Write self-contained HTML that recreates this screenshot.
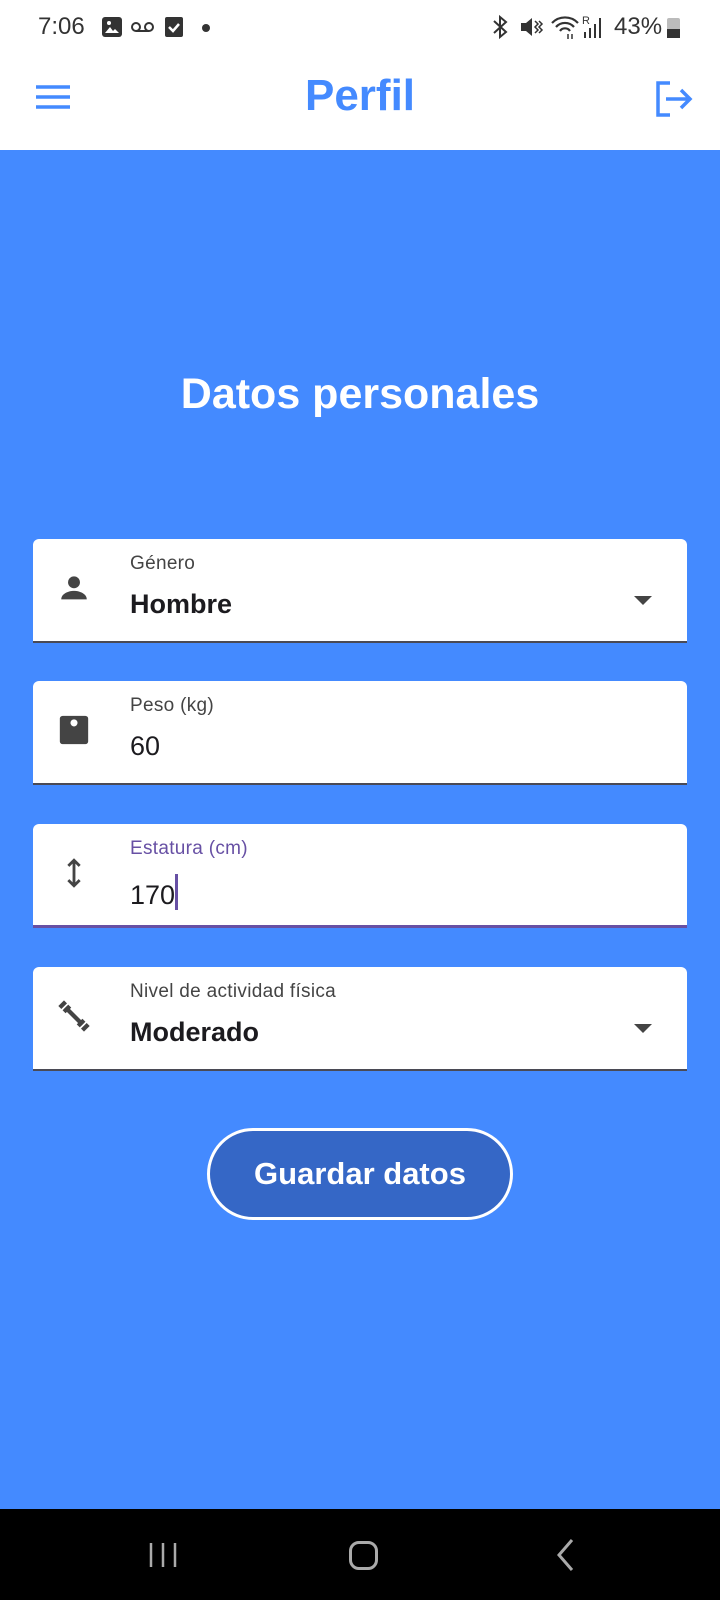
<!DOCTYPE html>
<html><head><meta charset="utf-8"><style>
*{margin:0;padding:0;box-sizing:border-box}
body{width:720px;height:1600px;position:relative;background:#448aff;font-family:"Liberation Sans",sans-serif;overflow:hidden}
.abs{position:absolute}
.top{left:0;top:0;width:720px;height:150px;background:#fff}
.field{position:absolute;left:33px;width:654px;height:104px;background:#fff;border-radius:6px 6px 0 0;border-bottom:2px solid #4a4a55}
.lbl{position:absolute;left:97px;top:14px;font-size:19px;color:#444;letter-spacing:.3px}
.val{position:absolute;left:97px;top:50px;font-size:27px;color:#1c1b1f}
.ico{position:absolute;left:24px;top:32px;width:34px;height:34px}
.arr{position:absolute;left:601px;top:57px;width:0;height:0;border-left:9px solid transparent;border-right:9px solid transparent;border-top:9px solid #444}
</style></head><body>
<div class="abs top"></div>
<div class="abs" style="left:38px;top:13px;font-size:24px;color:#333">7:06</div>
<svg class="abs" style="left:101px;top:16px" width="22" height="22"><rect x="1" y="1" width="20" height="20" rx="3" fill="#333"/><path d="M4 17l5-6 3 4 2-2 4 4z" fill="#fff"/><circle cx="8" cy="7" r="2" fill="#fff"/></svg>
<svg class="abs" style="left:131px;top:21px" width="24" height="12"><circle cx="5" cy="6" r="4" fill="none" stroke="#333" stroke-width="2"/><circle cx="18" cy="6" r="4" fill="none" stroke="#333" stroke-width="2"/><path d="M5 10h13" stroke="#333" stroke-width="2"/></svg>
<svg class="abs" style="left:164px;top:16px" width="20" height="22"><rect x="1" y="1" width="18" height="20" rx="2" fill="#333"/><path d="M5 11l4 4 6-7" stroke="#fff" stroke-width="2.5" fill="none"/></svg>
<div class="abs" style="left:202px;top:24px;width:8px;height:8px;border-radius:50%;background:#333"></div>
<svg class="abs" style="left:490px;top:14px" width="20" height="26"><path d="M4 7l12 11-6 5V3l6 5L4 19" stroke="#333" stroke-width="2" fill="none"/></svg>
<svg class="abs" style="left:519px;top:15px" width="26" height="24"><path d="M2 8h5l6-5v18l-6-5H2z" fill="#333"/><path d="M16 6l3 3-3 3 3 3-3 3M20 6l3 3-3 3 3 3-3 3" stroke="#333" stroke-width="1.5" fill="none"/></svg>
<svg class="abs" style="left:550px;top:14px" width="30" height="26"><path d="M2 9a18 18 0 0 1 26 0M6 13a12 12 0 0 1 18 0M10 17a6 6 0 0 1 10 0" stroke="#333" stroke-width="2.2" fill="none"/><path d="M18 20v5M22 20v5" stroke="#333" stroke-width="1.5"/></svg>
<svg class="abs" style="left:582px;top:14px" width="24" height="26"><text x="0" y="10" font-size="11" font-family="Liberation Sans" fill="#333">R</text><path d="M3 24v-6M8 24v-10M13 24v-14M18 24V4" stroke="#333" stroke-width="2"/></svg>
<div class="abs" style="left:614px;top:13px;font-size:24px;color:#333">43%</div>
<div class="abs" style="left:667px;top:18px;width:13px;height:20px;background:#bbb;border-radius:2px"><div style="position:absolute;bottom:0;width:13px;height:9px;background:#333"></div></div>
<svg class="abs" style="left:35px;top:84px" width="36" height="26"><path d="M1 3h34M1 13h34M1 23h34" stroke="#448aff" stroke-width="3.5"/></svg>
<div class="abs" style="left:0;width:720px;top:71px;text-align:center;font-size:44px;font-weight:bold;color:#448aff">Perfil</div>
<svg class="abs" style="left:654px;top:80px" width="40" height="38"><path d="M16 3H4v32h12" stroke="#448aff" stroke-width="3.5" fill="none"/><path d="M12 19h24M27 10l9 9-9 9" stroke="#448aff" stroke-width="3.5" fill="none"/></svg>
<div class="abs" style="left:0;width:720px;top:370px;text-align:center;font-size:43px;font-weight:bold;color:#fff">Datos personales</div>

<div class="field" style="top:539px"><svg class="ico" viewBox="0 0 24 24"><circle cx="12" cy="8" r="4.2" fill="#444"/><path d="M3 20c0-4 5-6 9-6s9 2 9 6z" fill="#444"/></svg><div class="lbl">Género</div><div class="val" style="font-weight:bold">Hombre</div><div class="arr"></div></div>
<div class="field" style="top:681px"><svg class="ico" viewBox="0 0 24 24"><rect x="2" y="2" width="20" height="20" rx="2" fill="#444"/><circle cx="12" cy="7" r="2.5" fill="#fff"/></svg><div class="lbl">Peso (kg)</div><div class="val">60</div></div>
<div class="field" style="top:824px;border-bottom:3px solid #6750a4"><svg class="ico" viewBox="0 0 24 24"><path d="M12 3v18M8 7l4-4 4 4M8 17l4 4 4-4" stroke="#444" stroke-width="2" fill="none"/></svg><div class="lbl" style="color:#6750a4">Estatura (cm)</div><div class="val">170<span style="display:inline-block;width:3px;height:36px;background:#6750a4;vertical-align:-6px"></span></div></div>
<div class="field" style="top:967px"><svg class="ico" viewBox="0 0 24 24"><path d="M6 6l12 12" stroke="#444" stroke-width="3"/><path d="M2 6l4-4M5 9l4-4M15 19l4-4M18 22l4-4" stroke="#444" stroke-width="3"/></svg><div class="lbl">Nivel de actividad física</div><div class="val" style="font-weight:bold">Moderado</div><div class="arr"></div></div>

<div class="abs" style="left:207px;top:1128px;width:306px;height:92px;border:3px solid #fff;border-radius:46px;background:#3567c6;color:#fff;font-weight:bold;font-size:31px;text-align:center;line-height:86px">Guardar datos</div>

<div class="abs" style="left:0;top:1509px;width:720px;height:91px;background:#000"></div>
<svg class="abs" style="left:148px;top:1541px" width="30" height="28"><path d="M3 2v24M15 2v24M27 2v24" stroke="#aaa" stroke-width="2.5"/></svg>
<div class="abs" style="left:349px;top:1541px;width:29px;height:29px;border:3px solid #aaa;border-radius:10px"></div>
<svg class="abs" style="left:555px;top:1538px" width="20" height="34"><path d="M17 2L4 17l13 15" stroke="#aaa" stroke-width="3" fill="none"/></svg>
</body></html>
